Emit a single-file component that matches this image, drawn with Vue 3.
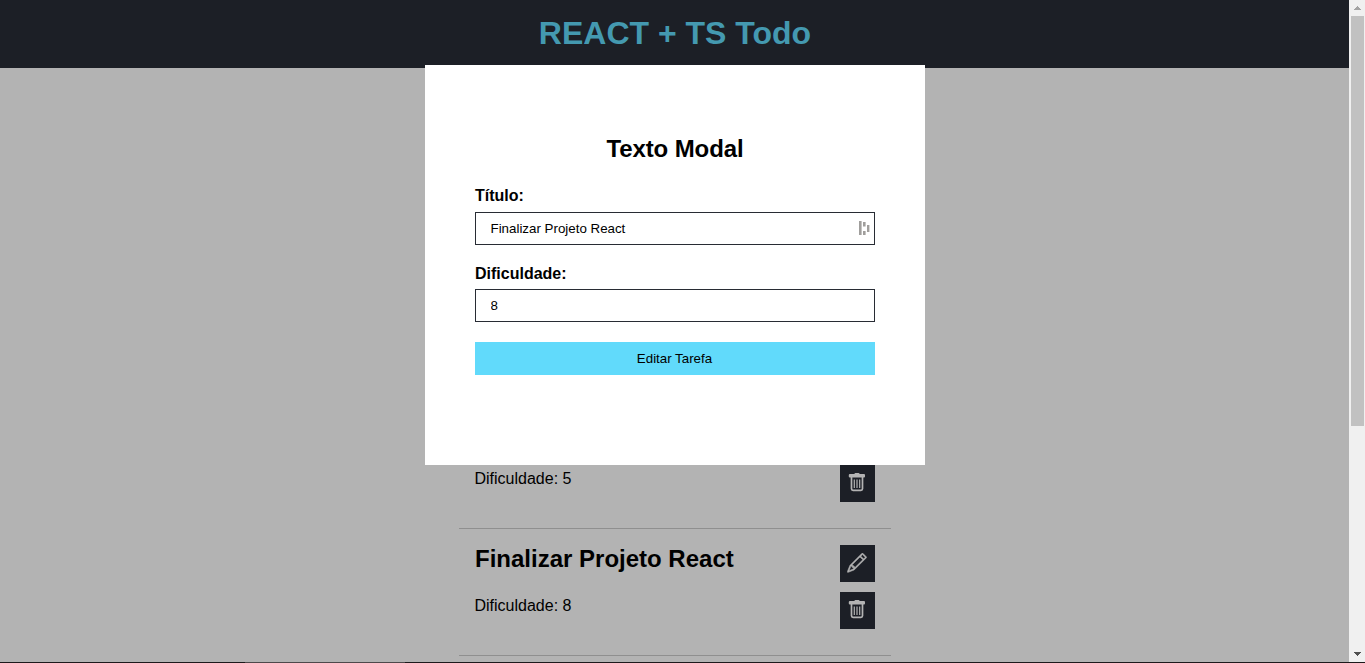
<script setup>
const tasks = [
  { id: 1, difficulty: 5 },
  { id: 2, title: 'Finalizar Projeto React', difficulty: 8 },
]
</script>

<template>
  <div class="window">
    <div class="page">
      <header class="header"><h1>REACT + TS Todo</h1></header>
      <main class="list">
        <article v-for="task in tasks" :key="task.id" class="task">
          <div class="details">
            <h2 v-if="task.title">{{ task.title }}</h2>
            <p>Dificuldade: {{ task.difficulty }}</p>
          </div>
          <div class="actions">
            <button v-if="task.title" aria-label="Editar">
              <svg class="pencil" viewBox="-.3 -.1 16.6 16.6"><path d="M12.146.146a.5.5 0 0 1 .708 0l3 3a.5.5 0 0 1 0 .708l-10 10a.5.5 0 0 1-.168.11l-5 2a.5.5 0 0 1-.65-.65l2-5a.5.5 0 0 1 .11-.168l10-10zM11.207 2.5 13.5 4.793 14.793 3.5 12.5 1.207 11.207 2.5zm1.586 3L10.5 3.207 4 9.707V10h.5a.5.5 0 0 1 .5.5v.5h.5a.5.5 0 0 1 .5.5v.5h.293l6.5-6.5zm-9.761 5.175-.106.106-1.528 3.821 3.821-1.528.106-.106A.5.5 0 0 1 5 12.5V12h-.5a.5.5 0 0 1-.5-.5V11h-.5a.5.5 0 0 1-.468-.325z"/></svg>
            </button>
            <button aria-label="Excluir">
              <svg viewBox="0 0 20 20"><rect x="7.5" width="5" height="2" rx=".8"/><rect x="1.8" y="1.1" width="16.2" height="3.5" rx="1"/><path class="can" d="M4.5 4v11.7q0 1.6 1.6 1.6h7.8q1.6 0 1.6-1.6V4"/><path class="bars" d="M7.3 6.5v8.4M10 6.5v8.4M12.7 6.5v8.4"/></svg>
            </button>
          </div>
        </article>
      </main>
    </div>
    <div class="scrollbar">
      <svg class="up" viewBox="0 0 7 4" shape-rendering="crispEdges"><path d="M3 0h1v1h1v1h1v1h1v1H0V3h1V2h1V1h1z"/></svg>
      <div class="thumb"></div>
      <svg class="down" viewBox="0 0 7 4" shape-rendering="crispEdges"><path d="M0 0h7v1H6v1H5v1H4v1H3V3H2V2H1V1H0z"/></svg>
    </div>
    <section class="modal">
      <h2>Texto Modal</h2>
      <form @submit.prevent>
        <label for="title">Título:</label>
        <div class="field">
          <input id="title" type="text" value="Finalizar Projeto React">
          <svg class="badge" viewBox="0 0 12 16"><path d="M1 1h2.6v14H1zM5 2h2.6v4.5H5zM5 11h2.6v4H5zM9 5h2.4v7H9z"/></svg>
        </div>
        <label for="difficulty" class="second">Dificuldade:</label>
        <div class="field"><input id="difficulty" type="text" value="8"></div>
        <button type="submit">Editar Tarefa</button>
      </form>
    </section>
    <div class="taskbar"><i></i></div>
  </div>
</template>

<style>
body { margin: 0; overflow: hidden; }
</style>

<style scoped>
* { box-sizing: border-box; margin: 0; }
.window { position: relative; display: flex; width: 1365px; height: 663px; overflow: hidden; font-family: "Liberation Sans", Arial, sans-serif; color: #000; }
.page { flex: 1; background: #b3b3b3; }
.header { height: 68px; background: #1c1f26; display: flex; align-items: center; justify-content: center; }
h1 { font-size: 32px; line-height: 36px; color: #4499b0; padding: 0 0 2px 1px; }
.list { width: 432px; margin: 397px auto 0; }
.task { display: flex; justify-content: space-between; padding: 16px; border-bottom: 1px solid #8f8f8f; }
.task:first-child { padding-top: 0; }
.details { display: flex; flex-direction: column; }
.details h2 { font-size: 24px; line-height: 28px; margin-bottom: 24px; padding-left: .5px; }
.details p { font-size: 16px; line-height: 18px; }
.task:first-child p { padding-top: 5px; }
.actions button { display: flex; align-items: center; justify-content: center; width: 35px; height: 37px; padding: 0 0 1px; margin-bottom: 10px; border: 0; background: #1c1f26; }
.actions svg { width: 20px; height: 20px; fill: #b3b3b3; }
.actions .pencil { stroke: #b3b3b3; stroke-width: .45; }
.actions .can { fill: none; stroke: #b3b3b3; stroke-width: 1.7; }
.actions .bars { fill: none; stroke: #b3b3b3; stroke-width: 1.2; }
.scrollbar { width: 16px; padding: 6px 0 7px; background: #f0f0f0; display: flex; flex-direction: column; align-items: center; }
.scrollbar svg { width: 7px; height: 4px; flex: none; }
.up { fill: #a3a3a3; }
.down { fill: #505050; margin-top: auto; }
.thumb { width: 13px; height: 410px; margin: 6px 0 0 1px; background: #c1c1c1; }
.modal { position: absolute; left: 425px; top: 65px; width: 500px; height: 400px; padding: 70px 50px; background: #fff; }
.modal h2 { font-size: 24px; line-height: 28px; letter-spacing: -.1px; text-align: center; margin-bottom: 24px; }
form { display: flex; flex-direction: column; }
label { font-size: 16px; line-height: 18px; font-weight: 700; margin-bottom: 7px; }
label.second { margin-bottom: 6px; }
.field { position: relative; display: flex; margin-bottom: 20px; }
.field input { width: 100%; height: 33px; padding: 0 15px 0 14.5px; border: 1px solid #282c34; border-radius: 0; background: #fff; font: 13.333px "Liberation Sans", Arial, sans-serif; color: #000; outline: 0; }
.badge { position: absolute; right: 5px; top: 8px; width: 12px; height: 16px; fill: #a09e9c; }
form > button { height: 33px; padding: 0 1px 0 0; border: 0; background: #61dafb; font: 13.333px "Liberation Sans", Arial, sans-serif; color: #000; }
.taskbar { position: absolute; left: 0; right: 0; bottom: 0; height: 1px; padding-left: 245px; background: #1c191b; }
.taskbar i { display: block; width: 160px; height: 1px; background: #4d484a; }
</style>
